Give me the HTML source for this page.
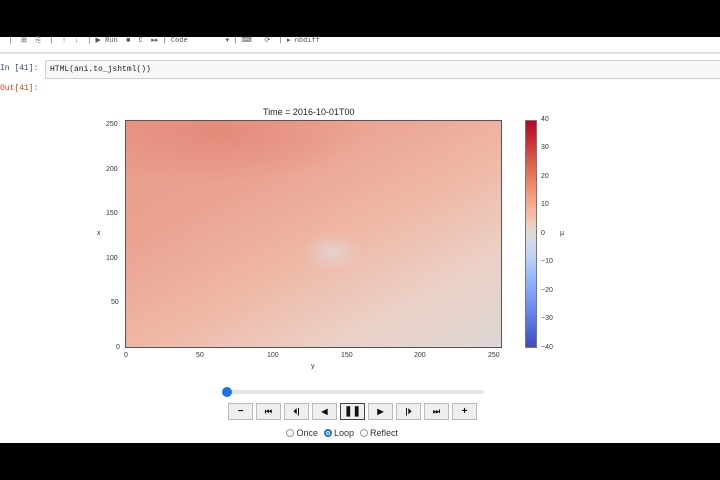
<!DOCTYPE html>
<html><head><meta charset="utf-8"><style>
*{margin:0;padding:0;box-sizing:border-box}
body{width:720px;height:480px;overflow:hidden;background:#fff;position:relative;font-family:"Liberation Sans",sans-serif}
.a{position:absolute}
.t{position:absolute;font-size:7px;color:#333;line-height:8px}
.btn{position:absolute;top:403px;width:25px;height:17px;background:#efefef;border:1px solid #bbb;font-size:10px;text-align:center;line-height:15px;color:#111;font-weight:bold}
</style></head><body>
<div class="a" style="left:0;top:0;width:720px;height:37px;background:#000"></div>
<div class="a" style="left:0;top:37px;width:720px;height:10px;font-family:'Liberation Mono',monospace;font-size:7px;color:#555;line-height:8px;white-space:pre">  |  ⊞  ⎘  |  ↑  ↓  | ▶ Run  ■  C  ▸▸ | Code         ▾ | ⌨   ⟳  | ▸ nbdiff</div>
<div class="a" style="left:0;top:52px;width:720px;height:2px;background:#e0e0e0"></div>
<div class="a" style="left:0;top:64px;font-family:'Liberation Mono',monospace;font-size:8px;color:#303f9f">In [41]:</div>
<div class="a" style="left:45px;top:60px;width:680px;height:19px;background:#f7f7f7;border:1px solid #cfcfcf;border-radius:2px;font-family:'Liberation Mono',monospace;font-size:8px;line-height:17px;padding-left:4px;color:#222">HTML(ani.to_jshtml())</div>
<div class="a" style="left:0;top:84px;font-family:'Liberation Mono',monospace;font-size:8px;color:#d84315">Out[41]:</div>
<div class="a" style="left:263px;top:107px;font-size:9px;color:#222">Time = 2016-10-01T00</div>
<div class="a" style="left:125px;top:120px;width:377px;height:228px;border:1px solid #555;
background:
radial-gradient(ellipse 30px 20px at 55% 58%,rgba(225,218,222,0.7),transparent),
radial-gradient(ellipse 140px 50px at 25% 5%,rgba(220,115,100,0.45),transparent),
linear-gradient(152deg,#e8998a 0%,#eba392 30%,#efb8a6 55%,#ebd0c6 78%,#ddd7d5 100%)"></div>
<div class="a" style="left:525px;top:120px;width:12px;height:228px;border:1px solid #777;background:linear-gradient(#b40426,#dc5d4a 18%,#f4987a 32%,#f2cbb7 45%,#dddcdc 50%,#bfd3f6 60%,#8db0fe 72%,#6788ee 84%,#3b4cc0)"></div>
<div class="t" style="left:541px;top:116px">40</div>
<div class="t" style="left:541px;top:144px">30</div>
<div class="t" style="left:541px;top:173px">20</div>
<div class="t" style="left:541px;top:201px">10</div>
<div class="t" style="left:541px;top:230px">0</div>
<div class="t" style="left:541px;top:258px">−10</div>
<div class="t" style="left:541px;top:287px">−20</div>
<div class="t" style="left:541px;top:315px">−30</div>
<div class="t" style="left:541px;top:344px">−40</div>
<div class="t" style="left:560px;top:230px">μ</div>
<div class="t" style="left:106px;top:121px">250</div>
<div class="t" style="left:106px;top:166px">200</div>
<div class="t" style="left:106px;top:210px">150</div>
<div class="t" style="left:106px;top:255px">100</div>
<div class="t" style="left:111px;top:299px">50</div>
<div class="t" style="left:116px;top:344px">0</div>
<div class="t" style="left:97px;top:230px">x</div>
<div class="t" style="left:124px;top:352px">0</div>
<div class="t" style="left:196px;top:352px">50</div>
<div class="t" style="left:267px;top:352px">100</div>
<div class="t" style="left:341px;top:352px">150</div>
<div class="t" style="left:414px;top:352px">200</div>
<div class="t" style="left:488px;top:352px">250</div>
<div class="t" style="left:311px;top:363px">y</div>
<div class="a" style="left:222px;top:390px;width:262px;height:4px;background:#e4e4e4;border-radius:2px"></div>
<div class="a" style="left:222px;top:387px;width:10px;height:10px;background:#1a73e8;border-radius:50%"></div>
<div class="btn" style="left:228px">−</div>
<div class="btn" style="left:256px;font-size:8px">⏮</div>
<div class="btn" style="left:284px;font-size:8px">⏴|</div>
<div class="btn" style="left:312px;font-size:8px">◀</div>
<div class="btn" style="left:340px;border:1px solid #444">❚❚</div>
<div class="btn" style="left:368px;font-size:8px">▶</div>
<div class="btn" style="left:396px;font-size:8px">|⏵</div>
<div class="btn" style="left:424px;font-size:8px">⏭</div>
<div class="btn" style="left:452px">+</div>
<div class="a" style="left:286px;top:428px;font-size:9px;color:#333;line-height:10px">
<span style="display:inline-block;width:8px;height:8px;border:1px solid #999;border-radius:50%;vertical-align:-1px"></span> Once
<span style="display:inline-block;width:8px;height:8px;border:2px solid #1a73e8;border-radius:50%;background:#1a73e8;box-shadow:inset 0 0 0 1px #fff;vertical-align:-1px;margin-left:3px"></span> Loop
<span style="display:inline-block;width:8px;height:8px;border:1px solid #999;border-radius:50%;vertical-align:-1px;margin-left:3px"></span> Reflect</div>
<div class="a" style="left:0;top:443px;width:720px;height:37px;background:#000"></div>
</body></html>
